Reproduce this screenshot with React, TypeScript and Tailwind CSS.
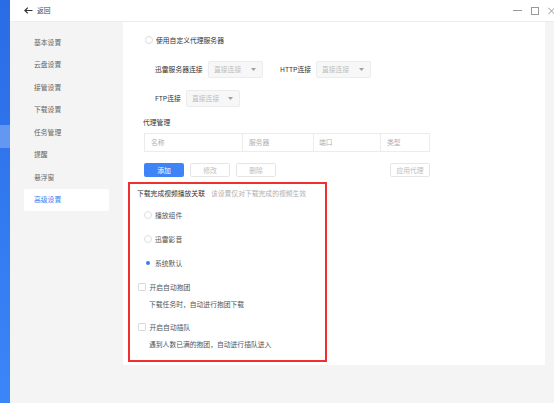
import React from 'react';

const font = { fontFamily: '"Noto Sans CJK SC", "Noto Sans", sans-serif' };

const navItems = ['基本设置', '云盘设置', '接管设置', '下载设置', '任务管理', '提醒', '悬浮窗', '高级设置'];

const Radio = ({ checked = false }: { checked?: boolean }) => (
  <span
    className={`flex h-[8px] w-[8px] items-center justify-center rounded-full border ${
      checked ? 'border-white' : 'border-[#dedede]'
    } bg-white`}
  >
    {checked && <span className="h-[4.5px] w-[4.5px] rounded-full bg-[#3a7ef5]" />}
  </span>
);

const Checkbox = () => <span className="h-[7.5px] w-[7.5px] rounded-[1px] border border-[#dadada] bg-white" />;

const Select = ({ w }: { w: string }) => (
  <div className={`flex h-[17px] ${w} items-center justify-between rounded-[2px] border border-[#ececec] bg-[#f7f7f7] pl-[5px] pr-[6px]`}>
    <span className="text-[#bdbdbd]">直接连接</span>
    <svg width="5" height="3" viewBox="0 0 5 3">
      <path d="M0 0h5L2.5 3z" fill="#a0a0a0" />
    </svg>
  </div>
);

const App = () => {
  return (
    <div className="flex h-[403px] w-[554px] overflow-hidden bg-[#f4f4f4] text-[6.8px] leading-none" style={font}>
      {/* blue side strip */}
      <div className="flex w-[10px] flex-col bg-gradient-to-b from-[#2a6be6] to-[#3b86f8]">
        <div className="h-[125px]" />
        <div className="h-[23px] bg-white/25" />
      </div>

      <div className="flex flex-1 flex-col">
        {/* header */}
        <div className="flex h-[22px] items-center justify-between border-b border-[#ececec] bg-white">
          <div className="flex items-center gap-[4px] pl-[14px]">
            <svg width="9" height="7" viewBox="0 0 9 7">
              <path d="M8.5 3.5H1M3.8 0.6L0.9 3.5l2.9 2.9" fill="none" stroke="#333" strokeWidth="1.2" />
            </svg>
            <span className="text-[#444]">返回</span>
          </div>
          <div className="flex items-center gap-[9px]">
            <svg width="9" height="7" viewBox="0 0 9 7">
              <path d="M0 3.5h9" stroke="#9a9a9a" strokeWidth="1" />
            </svg>
            <svg width="8" height="8" viewBox="0 0 8 8">
              <rect x="0.5" y="0.5" width="7" height="7" fill="none" stroke="#9a9a9a" strokeWidth="1" />
            </svg>
            <svg width="6" height="8" viewBox="0 0 6 8">
              <path d="M0 0.5l7 7M7 0.5l-7 7" stroke="#9a9a9a" strokeWidth="1" />
            </svg>
          </div>
        </div>

        <div className="flex flex-1">
          {/* sidebar */}
          <div className="w-[113px] pt-[9px] pl-[14px]">
            {navItems.map((item) => (
              <div
                key={item}
                className={`flex h-[22.5px] w-[85px] items-center pl-[10px] ${
                  item === '高级设置' ? 'rounded-[2px] bg-white text-[#3a7ef5]' : 'text-[#666]'
                }`}
              >
                {item}
              </div>
            ))}
          </div>

          {/* content card */}
          <div className="flex h-[343px] w-[422px] flex-col bg-white text-[#333]">
            <div className="mt-[11px] flex h-[14px] items-center gap-[3px] pl-[22px]">
              <Radio />
              <span>使用自定义代理服务器</span>
            </div>

            <div className="mt-[14px] flex h-[17px] items-center pl-[32px]">
              <span className="w-[53px]">迅雷服务器连接</span>
              <Select w="w-[55px]" />
              <span className="ml-[17px] w-[36px]">HTTP连接</span>
              <Select w="w-[55px]" />
            </div>

            <div className="mt-[12px] flex h-[17px] items-center pl-[32px]">
              <span className="w-[31px]">FTP连接</span>
              <Select w="w-[54px]" />
            </div>

            <div className="mt-[10px] flex h-[10px] items-center pl-[20px]">代理管理</div>

            <div className="ml-[21px] mt-[6px] flex h-[19px] w-[286px] border border-[#ececec] text-[#b0b0b0]">
              <div className="flex w-[98px] items-center border-r border-[#ececec] pl-[6px]">名称</div>
              <div className="flex w-[71px] items-center border-r border-[#ececec] pl-[6px]">服务器</div>
              <div className="flex w-[67px] items-center border-r border-[#ececec] pl-[5px]">端口</div>
              <div className="flex flex-1 items-center pl-[6px]">类型</div>
            </div>

            <div className="ml-[21px] mt-[11px] flex h-[14px] w-[286px] items-center justify-between">
              <div className="flex h-full gap-[6px]">
                <button className="h-full w-[40px] rounded-[2px] bg-[#3f84f6] text-white">添加</button>
                <button className="h-full w-[40px] rounded-[2px] border border-[#e6e6e6] text-[#bdbdbd]">修改</button>
                <button className="h-full w-[40px] rounded-[2px] border border-[#e6e6e6] text-[#bdbdbd]">删除</button>
              </div>
              <button className="h-full w-[40px] rounded-[2px] border border-[#e6e6e6] text-[#bdbdbd]">应用代理</button>
            </div>

            {/* highlighted block */}
            <div className="ml-[5px] mt-[5px] flex h-[180px] w-[199px] flex-col border-2 border-[#f02f2f] pt-[4px]">
              <div className="flex h-[10px] items-center pl-[7px]">
                <span>下载完成视频播放关联</span>
                <span className="ml-[6px] text-[#b0b0b0]">该设置仅对下载完成的视频生效</span>
              </div>
              <div className="mt-[12px] flex h-[10px] items-center gap-[3px] pl-[14px] text-[#555]">
                <Radio />
                <span>播放组件</span>
              </div>
              <div className="mt-[14px] flex h-[10px] items-center gap-[3px] pl-[14px] text-[#555]">
                <Radio />
                <span>迅雷影音</span>
              </div>
              <div className="mt-[14px] flex h-[10px] items-center gap-[3px] pl-[14px] text-[#555]">
                <Radio checked />
                <span>系统默认</span>
              </div>
              <div className="mt-[14px] flex h-[10px] items-center gap-[4px] pl-[8px] text-[#555]">
                <Checkbox />
                <span>开启自动抱团</span>
              </div>
              <div className="mt-[7px] flex h-[10px] items-center pl-[19px] text-[#555]">下载任务时，自动进行抱团下载</div>
              <div className="mt-[13px] flex h-[10px] items-center gap-[4px] pl-[8px] text-[#555]">
                <Checkbox />
                <span>开启自动插队</span>
              </div>
              <div className="mt-[7px] flex h-[10px] items-center pl-[19px] text-[#555]">遇到人数已满的抱团，自动进行插队进入</div>
            </div>
          </div>
        </div>
      </div>
    </div>
  );
};

export default App;
